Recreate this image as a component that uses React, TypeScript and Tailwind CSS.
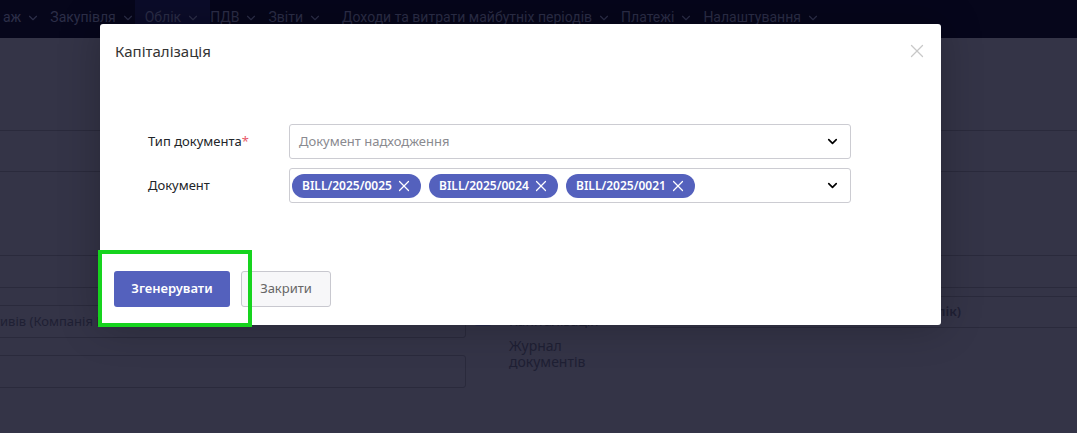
import { X, ChevronDown } from 'lucide-react';

const navItems = ['аж', 'Закупівля', 'Облік', 'ПДВ', 'Звіти', 'Доходи та витрати майбутніх періодів', 'Платежі', 'Налаштування'];
const chips = ['BILL/2025/0025', 'BILL/2025/0024', 'BILL/2025/0021'];

function NavBar() {
  return (
    <div className="h-[38px] bg-[#06061b] flex items-center text-[14px] text-[#2c2e48] font-['Roboto',sans-serif] -ml-[2px]">
      {navItems.map((item) => (
        <div
          key={item}
          className={`h-full flex items-center gap-[5px] px-[5px] pb-[3px] ${item === 'Облік' ? 'bg-[#0b0c2a] -mx-[5px] px-[10px]' : ''} ${item.startsWith('Доходи') ? 'ml-[10px]' : ''}`}
        >
          <span>{item}</span>
          <ChevronDown className="w-[14px] h-[14px]" strokeWidth={2} />
        </div>
      ))}
    </div>
  );
}

function Backdrop() {
  return (
    <div className="flex flex-col text-[#1f2034] font-['Noto_Sans',sans-serif]">
      <div className="h-[93px] border-b border-[#2a2a3c]" />
      <div className="h-[41px] border-b border-[#2a2a3c]" />
      <div className="h-[84px] border-b border-[#2a2a3c]" />
      <div className="h-[32px] border-b border-[#2a2a3c]" />
      <div className="flex">
        <div className="w-[650px] h-[9px]" />
        <div className="flex-1 h-[9px] border-b border-[#2a2a3c]" />
      </div>
      <div className="flex">
        <div className="w-[466px] flex flex-col gap-[17px] pt-[8px]">
          <div className="h-[33px] border border-[#2a2a3c] rounded-[3px] flex items-center text-[13px] -ml-[4px]">
            <span className="-ml-[3px]">тивів (Компанія Б</span>
          </div>
          <div className="h-[33px] border border-[#2a2a3c] rounded-[3px] -ml-[4px]" />
        </div>
        <div className="w-[184px] flex flex-col pl-[9px] pt-[16px]">
          <div className="flex items-center gap-[18px]">
            <div className="w-[16px] h-[10px] bg-[#262848] rounded-[2px]" />
            <span className="text-[14px] leading-[16px]">Капіталізація</span>
          </div>
          <div className="pl-[34px] pt-[9px] text-[14px] leading-[16px]">
            Журнал
            <br />
            документів
          </div>
        </div>
        <div className="flex-1 flex flex-col">
          <div className="h-[31px] border-b border-[#2a2a3c] flex items-center justify-end pr-[116px] text-[13px] font-semibold">
            лік)
          </div>
        </div>
      </div>
    </div>
  );
}

function Modal() {
  return (
    <div className="absolute left-[100px] top-[24px] w-[841px] h-[301px] bg-white rounded-[3px] shadow-[0_0_40px_rgba(0,0,0,0.25)] font-['Noto_Sans',sans-serif] flex flex-col">
      <div className="flex items-center justify-between pl-[15px] pr-[13px] pt-[16px]">
        <div className="text-[15px] leading-[20px] text-[#333]">Капіталізація</div>
        <X className="w-[22px] h-[22px] text-[#c8c8c8]" strokeWidth={1.4} />
      </div>
      <div className="flex flex-col gap-[9px] pt-[62px] pl-[48px]">
        <div className="flex items-center">
          <div className="w-[141px] text-[13px] text-[#212529]">
            Тип документа<span className="text-[#e8596a]">*</span>
          </div>
          <div className="w-[562px] h-[35px] border border-[#ccccd2] rounded-[3px] flex items-center justify-between pl-[9px] pr-[10px]">
            <span className="text-[13px] text-[#8a8a90]">Документ надходження</span>
            <ChevronDown className="w-[15px] h-[15px] text-black" strokeWidth={2.6} />
          </div>
        </div>
        <div className="flex items-center">
          <div className="w-[141px] text-[13px] text-[#212529]">Документ</div>
          <div className="w-[562px] h-[35px] border border-[#ccccd2] rounded-[3px] flex items-center justify-between pl-[2px] pr-[10px]">
            <div className="flex gap-[8px]">
              {chips.map((c) => (
                <div
                  key={c}
                  className="h-[24px] w-[129px] rounded-full bg-[#5461bd] text-white text-[12px] font-semibold flex items-center pl-[10px] gap-[3px]"
                >
                  <span>{c}</span>
                  <X className="w-[18px] h-[18px]" strokeWidth={1.6} />
                </div>
              ))}
            </div>
            <ChevronDown className="w-[15px] h-[15px] text-black" strokeWidth={2.6} />
          </div>
        </div>
      </div>
      <div className="flex gap-[11px] pl-[14px] mt-auto mb-[18px]">
        <button className="w-[116px] h-[36px] rounded-[3px] bg-[#5461bd] text-white text-[13px] font-semibold">
          Згенерувати
        </button>
        <button className="w-[90px] h-[36px] rounded-[3px] bg-[#f7f7f9] border border-[#c8c8cf] text-[#666] text-[13px]">
          Закрити
        </button>
      </div>
    </div>
  );
}

export default function App() {
  return (
    <div className="relative w-[1077px] h-[433px] overflow-hidden bg-[#343447]">
      <NavBar />
      <Backdrop />
      <Modal />
      <div className="absolute left-[98px] top-[250px] w-[154px] h-[77px] border-[4px] border-[#16d41e]" />
    </div>
  );
}
